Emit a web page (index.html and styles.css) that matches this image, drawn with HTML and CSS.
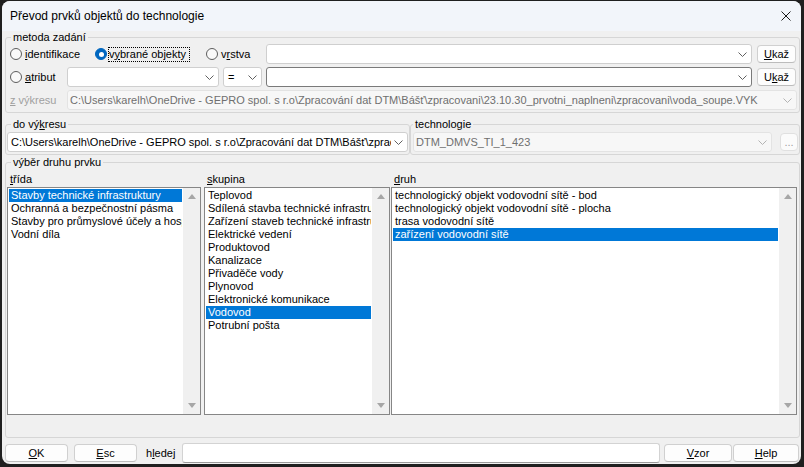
FILE: index.html
```html
<!DOCTYPE html>
<html lang="cs">
<head>
<meta charset="utf-8">
<title>Převod prvků objektů do technologie</title>
<link rel="stylesheet" href="styles.css">
</head>
<body>
<div class="window">
  <div class="titlebar">
    <span class="title">Převod prvků objektů do technologie</span>
    <svg class="close" width="10" height="10" viewBox="0 0 10 10"><path d="M0.5 0.5L9.5 9.5M9.5 0.5L0.5 9.5" stroke="#1b1b1b" stroke-width="1" fill="none"/></svg>
  </div>
  <div class="content">
    <fieldset class="group g-method">
      <legend>metoda zadání</legend>
      <div class="row">
        <label class="radio r-ident"><span class="rb"></span><span class="rtext"><u>i</u>dentifikace</span></label>
        <label class="radio r-sel"><span class="rb on"></span><span class="rtext focus">v<u>y</u>brané objekty</span></label>
        <label class="radio r-layer"><span class="rb"></span><span class="rtext">v<u>r</u>stva</span></label>
        <div class="combo c-layer"><span class="val"></span><svg class="chev" width="9" height="5" viewBox="0 0 9 5"><path d="M0.5 0.5L4.5 4.5L8.5 0.5" fill="none" stroke="currentColor"/></svg></div>
        <button class="btn ukaz"><u>U</u>kaž</button>
      </div>
      <div class="row">
        <label class="radio r-attr"><span class="rb"></span><span class="rtext"><u>a</u>tribut</span></label>
        <div class="combo c-attr"><span class="val"></span><svg class="chev" width="9" height="5" viewBox="0 0 9 5"><path d="M0.5 0.5L4.5 4.5L8.5 0.5" fill="none" stroke="currentColor"/></svg></div>
        <div class="combo c-op"><span class="val">=</span><svg class="chev" width="9" height="5" viewBox="0 0 9 5"><path d="M0.5 0.5L4.5 4.5L8.5 0.5" fill="none" stroke="currentColor"/></svg></div>
        <div class="combo c-attrval dark"><span class="val"></span><svg class="chev" width="9" height="5" viewBox="0 0 9 5"><path d="M0.5 0.5L4.5 4.5L8.5 0.5" fill="none" stroke="currentColor"/></svg></div>
        <button class="btn ukaz">U<u>k</u>až</button>
      </div>
      <div class="row">
        <span class="lbl-disabled"><u>z</u> výkresu</span>
        <div class="combo disabled c-from"><span class="val">C:\Users\karelh\OneDrive - GEPRO spol. s r.o\Zpracování dat DTM\Bášť\zpracovani\23.10.30_prvotni_naplneni\zpracovani\voda_soupe.VYK</span><svg class="chev" width="9" height="5" viewBox="0 0 9 5"><path d="M0.5 0.5L4.5 4.5L8.5 0.5" fill="none" stroke="currentColor"/></svg></div>
      </div>
    </fieldset>

    <div class="pair">
      <fieldset class="group g-to">
        <legend>do vý<u>k</u>resu</legend>
        <div class="combo c-to"><span class="val">C:\Users\karelh\OneDrive - GEPRO spol. s r.o\Zpracování dat DTM\Bášť\zpracovani\23.10.30_prvotni_naplneni\zpracovani\voda_soupe.VYK</span><svg class="chev" width="9" height="5" viewBox="0 0 9 5"><path d="M0.5 0.5L4.5 4.5L8.5 0.5" fill="none" stroke="currentColor"/></svg></div>
      </fieldset>
      <fieldset class="group g-tech">
        <legend>technologie</legend>
        <div class="tech-row">
          <div class="combo disabled c-tech"><span class="val">DTM_DMVS_TI_1_423</span><svg class="chev" width="9" height="5" viewBox="0 0 9 5"><path d="M0.5 0.5L4.5 4.5L8.5 0.5" fill="none" stroke="currentColor"/></svg></div>
          <button class="btn dots" disabled>...</button>
        </div>
      </fieldset>
    </div>

    <fieldset class="group g-select">
      <legend>výběr druhu prvku</legend>
      <div class="lists">
        <div class="col col-trida">
          <div class="col-label"><u>t</u>řída</div>
          <div class="listbox">
            <div class="items">
              <div class="item sel">Stavby technické infrastruktury</div>
              <div class="item">Ochranná a bezpečnostní pásma</div>
              <div class="item">Stavby pro průmyslové účely a hospodářství</div>
              <div class="item">Vodní díla</div>
            </div>
            <div class="vscroll"><span class="arrow up"></span><span class="arrow down"></span></div>
          </div>
        </div>
        <div class="col col-skupina">
          <div class="col-label"><u>s</u>kupina</div>
          <div class="listbox">
            <div class="items">
              <div class="item">Teplovod</div>
              <div class="item">Sdílená stavba technické infrastruktury</div>
              <div class="item">Zařízení staveb technické infrastruktury</div>
              <div class="item">Elektrické vedení</div>
              <div class="item">Produktovod</div>
              <div class="item">Kanalizace</div>
              <div class="item">Přivaděče vody</div>
              <div class="item">Plynovod</div>
              <div class="item">Elektronické komunikace</div>
              <div class="item sel">Vodovod</div>
              <div class="item">Potrubní pošta</div>
            </div>
            <div class="vscroll"><span class="arrow up"></span><span class="arrow down"></span></div>
          </div>
        </div>
        <div class="col col-druh">
          <div class="col-label"><u>d</u>ruh</div>
          <div class="listbox">
            <div class="items">
              <div class="item">technologický objekt vodovodní sítě - bod</div>
              <div class="item">technologický objekt vodovodní sítě - plocha</div>
              <div class="item">trasa vodovodní sítě</div>
              <div class="item sel">zařízení vodovodní sítě</div>
            </div>
            <div class="vscroll"><span class="arrow up"></span><span class="arrow down"></span></div>
          </div>
        </div>
      </div>
    </fieldset>

    <div class="footer">
      <button class="btn b-ok"><u>O</u>K</button>
      <button class="btn b-esc"><u>E</u>sc</button>
      <span class="search-label">h<u>l</u>edej</span>
      <div class="search"></div>
      <button class="btn b-vzor"><u>V</u>zor</button>
      <button class="btn b-help"><u>H</u>elp</button>
    </div>
  </div>
</div>
</body>
</html>
```

FILE: styles.css
```css
* { box-sizing: border-box; }
html, body { margin: 0; padding: 0; }
body {
  width: 804px;
  height: 467px;
  overflow: hidden;
  background: #1f1f1f;
  font-family: "Liberation Sans", Arial, sans-serif;
  font-size: 11px;
  color: #000;
}
u { text-underline-offset: 1px; }

.window {
  margin: 1px 0 0 2px;
  width: 799px;
  height: 463px;
  background: #f0f0f0;
  border-radius: 8px;
  overflow: hidden;
  display: flex;
  flex-direction: column;
}
.titlebar {
  flex: none;
  height: 30px;
  background: #f2f5fa;
  display: flex;
  align-items: center;
  padding: 0 10px 0 8px;
}
.title { flex: 1; font-size: 12px; }
.close { display: block; }

.content { flex: 1; display: flex; flex-direction: column; }

fieldset.group {
  margin: 0;
  min-width: 0;
  border: 1px solid #d6d6d6;
  border-radius: 3px;
  padding: 0 2px 2px 1px;
}
fieldset.group legend {
  font-size: 11px;
  line-height: 13px;
  padding: 0 2px;
  margin-left: 4px;
}

/* group 1 */
.g-method { margin: 0 1px 0 3px !important; padding-left: 4px !important; }
.g-method legend { margin-left: 1px !important; }
.row { display: flex; align-items: center; height: 20px; }
.row + .row { margin-top: 3px; }

.radio { display: flex; align-items: center; flex: none; height: 20px; }
.r-ident { width: 85px; }
.r-sel { width: 111px; }
.r-layer { width: 60px; }
.r-attr { width: 57px; }
.rb {
  width: 12px; height: 12px; flex: none;
  border-radius: 50%;
  border: 1px solid #5d5d5d;
  background: #f9f9f9;
  display: flex; align-items: center; justify-content: center;
}
.rb.on { background: #0067c0; border-color: #0067c0; }
.rb.on::after { content: ""; width: 5px; height: 5px; border-radius: 50%; background: #fff; }
.rtext { margin-left: 3px; white-space: nowrap; }
.rtext.focus {
  margin-left: 1px;
  border: 1px dotted #000;
  line-height: 13px;
  padding: 0 3px 0 0;
}
.lbl-disabled { width: 57px; flex: none; color: #a0a0a0; white-space: nowrap; }

.combo {
  display: flex; align-items: center;
  height: 20px; flex: none;
  border: 1px solid #cfcfcf;
  border-radius: 3px;
  background: #fff;
  color: #606060;
}
.combo .val {
  flex: 1; min-width: 0;
  overflow: hidden; white-space: nowrap;
  padding-left: 2px;
  color: #000;
}
.combo .chev { flex: none; margin: 0 4px 0 3px; display: block; }
.combo.dark { border-color: #7a7a7a; }
.combo.disabled { background: #f7f7f7; border-color: #e3e3e3; color: #b3b3b3; }
.combo.disabled .val { color: #6f6f6f; }

.c-layer { width: 486px; }
.c-attr { width: 152px; }
.c-op { width: 39px; margin-left: 4px; }
.c-op .val { padding-left: 4px; }
.c-attrval { width: 486px; margin-left: 4px; }
.c-from { flex: 1; }

.btn {
  font: inherit;
  color: #000;
  height: 18px;
  padding: 0;
  border: 1px solid #d0d0d0;
  border-bottom-color: #bcbcbc;
  border-radius: 4px;
  background: #fdfdfd;
  flex: none;
  line-height: 16px;
}
.ukaz { width: 39px; margin-left: 5px; }

/* group 2 */
.pair { display: flex; margin-top: 5px; }
.g-to { width: 405px; margin-left: 3px !important; padding-right: 1px !important; }
.c-to { width: 401px; }
.c-to .val { padding-left: 3px; }
.g-tech { width: 390px; padding-left: 2px !important; }
.g-tech legend { margin-left: 0 !important; }
.g-to, .g-tech { padding-top: 1px !important; }
.tech-row { display: flex; align-items: center; }
.c-tech { width: 359px; }
.dots {
  width: 18px; margin-left: 8px;
  background: #fbfbfb;
  border-color: #e0e0e0;
  color: #a0a0a0;
  line-height: 12px;
}

/* group 3 */
.g-select { margin: 1px 1px 0 3px !important; padding-top: 4px !important; padding-bottom: 22px !important; }
.lists { display: flex; }
.col { flex: none; }
.col-trida { width: 194px; }
.col-skupina { width: 186px; margin-left: 3px; }
.col-druh { width: 406px; margin-left: 1px; }
.col-label { height: 13px; line-height: 13px; padding-left: 3px; margin-bottom: 1px; }
.listbox {
  height: 228px;
  border: 1px solid #868686;
  background: #fff;
  display: flex;
}
.items { flex: 1; min-width: 0; padding: 1px; overflow: hidden; }
.item {
  height: 13px; line-height: 13px;
  padding-left: 2px;
  white-space: nowrap; overflow: hidden;
}
.item.sel { background: #0078d7; color: #fff; }
.vscroll {
  width: 17px; flex: none;
  background: #f0f0f0;
  display: flex; flex-direction: column; justify-content: space-between;
}
.arrow { height: 17px; display: flex; align-items: center; justify-content: center; }
.arrow::before { content: ""; width: 0; height: 0; border-left: 4px solid transparent; border-right: 4px solid transparent; }
.arrow.up::before { border-bottom: 5px solid #a6a6a6; }
.arrow.down::before { border-top: 5px solid #a6a6a6; }

/* footer */
.footer { display: flex; align-items: center; height: 20px; margin: 5px 0 0 3px; }
.b-ok { width: 63px; }
.b-esc { width: 63px; margin-left: 6px; }
.search-label { width: 36px; margin-left: 9px; flex: none; }
.search {
  width: 478px; height: 20px; flex: none;
  background: #fff;
  border: 1px solid #d3d3d3;
  border-bottom-color: #9a9a9a;
  border-radius: 3px;
}
.b-vzor { width: 68px; margin-left: 4px; }
.b-help { width: 66px; margin-left: 1px; }
```
